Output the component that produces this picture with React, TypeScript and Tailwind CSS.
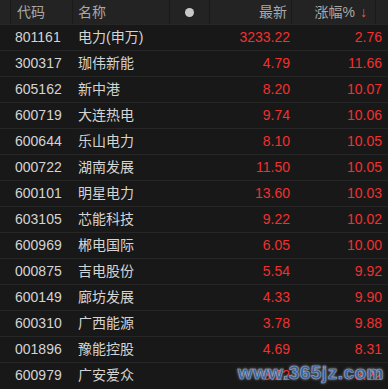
import React from 'react';

type Row = { code: string; name: string; price: string; pct: string };

const rows: Row[] = [
  { code: '801161', name: '电力(申万)', price: '3233.22', pct: '2.76' },
  { code: '300317', name: '珈伟新能', price: '4.79', pct: '11.66' },
  { code: '605162', name: '新中港', price: '8.20', pct: '10.07' },
  { code: '600719', name: '大连热电', price: '9.74', pct: '10.06' },
  { code: '600644', name: '乐山电力', price: '8.10', pct: '10.05' },
  { code: '000722', name: '湖南发展', price: '11.50', pct: '10.05' },
  { code: '600101', name: '明星电力', price: '13.60', pct: '10.03' },
  { code: '603105', name: '芯能科技', price: '9.22', pct: '10.02' },
  { code: '600969', name: '郴电国际', price: '6.05', pct: '10.00' },
  { code: '000875', name: '吉电股份', price: '5.54', pct: '9.92' },
  { code: '600149', name: '廊坊发展', price: '4.33', pct: '9.90' },
  { code: '600310', name: '广西能源', price: '3.78', pct: '9.88' },
  { code: '001896', name: '豫能控股', price: '4.69', pct: '8.31' },
  { code: '600979', name: '广安爱众', price: '3.22', pct: '8.22' },
];

const cols = 'grid grid-cols-[11px_62px_97px_40px_82px_84px_1fr]';

const App: React.FC = () => {
  return (
    <div
      className="relative w-[388px] h-[389px] overflow-hidden bg-[#181818] text-[14px]"
      style={{ fontFamily: '"Liberation Sans", "Noto Sans CJK SC", sans-serif' }}
    >
      {/* 表头 */}
      <div className={`${cols} h-[24px] bg-[#232323] text-[#a8a8a8] items-center`}>
        <div className="h-full border-r border-[#1a1a1a]" />
        <div className="h-full border-r border-[#1a1a1a] pl-[6px] flex items-center">代码</div>
        <div className="h-full border-r border-[#1a1a1a] pl-[5px] flex items-center">名称</div>
        <div className="h-full border-r border-[#1a1a1a] flex items-center justify-center">
          <span className="w-[9px] h-[9px] rounded-full bg-[#c8c8c8]" />
        </div>
        <div className="h-full border-r border-[#1a1a1a] pr-[4px] flex items-center justify-end">最新</div>
        <div className="h-full border-r border-[#1a1a1a] pr-[8px] flex items-center justify-end">
          涨幅%<span className="ml-[5px] text-[#ff5a2a]">↓</span>
        </div>
        <div className="h-full" />
      </div>

      {rows.map((r) => (
        <div key={r.code} className={`${cols} h-[26px] items-center border-t border-[#262626] bg-[#181818]`}>
          <div />
          <div className="pl-[4px] text-[#d4d4d4]">{r.code}</div>
          <div className="pl-[5px] text-[#d4d4d4] whitespace-nowrap">{r.name}</div>
          <div />
          <div className="pr-[2px] text-right text-[#f2302f]">{r.price}</div>
          <div className="-mr-[6px] pr-[0px] text-right text-[#f2302f]">{r.pct}</div>
          <div />
        </div>
      ))}

      {/* 水印 */}
      <div
        className="absolute right-[4px] bottom-[2px] text-[19px] font-bold text-[#2f5fa8] tracking-[0.5px]"
        style={{ fontFamily: '"Liberation Sans", sans-serif', WebkitTextStroke: '0.6px #9aa3b0', textShadow: '0 0 3px #c0c4cc' }}
      >
        www.365jz.com
      </div>
    </div>
  );
};

export default App;
